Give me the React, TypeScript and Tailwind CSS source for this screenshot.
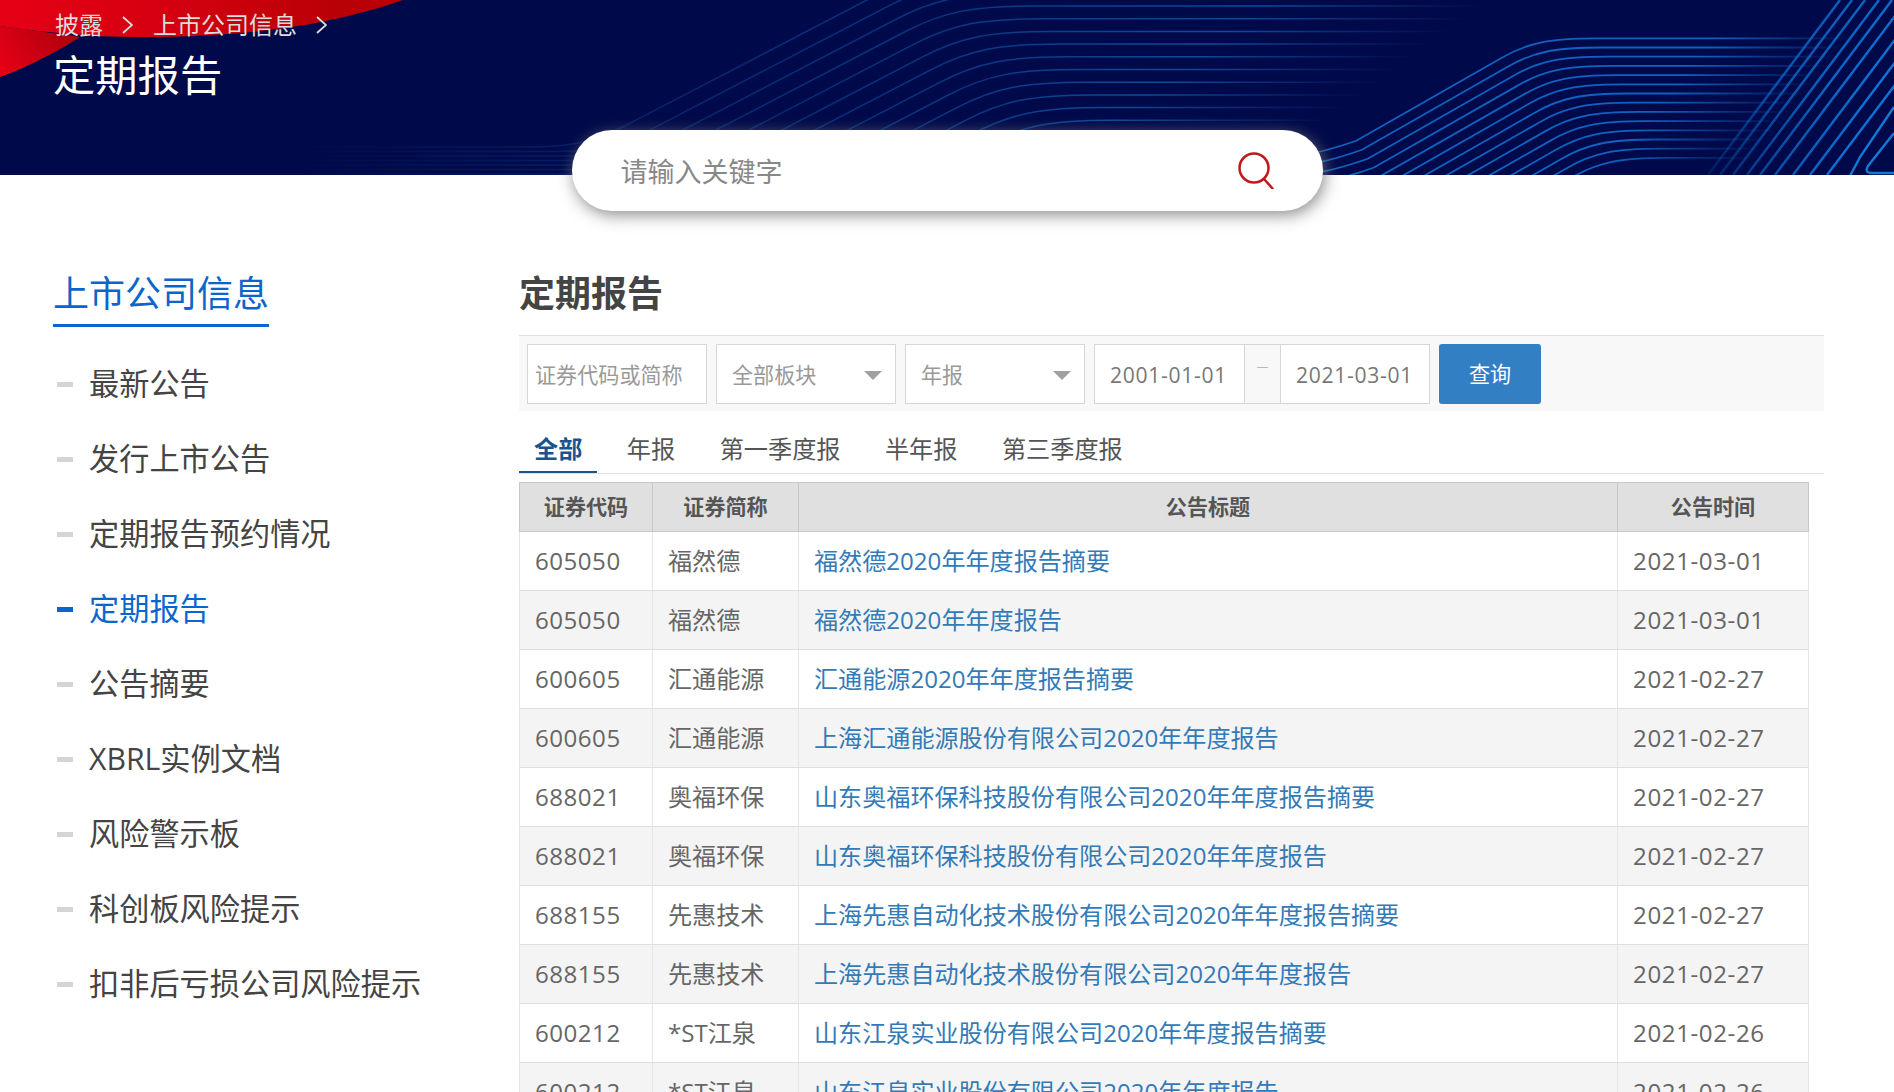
import React from 'react';

const cjk = { fontFamily: '"Open Sans", "Noto Sans CJK SC", sans-serif' };

const NAV = ['最新公告', '发行上市公告', '定期报告预约情况', '定期报告', '公告摘要', 'XBRL实例文档', '风险警示板', '科创板风险提示', '扣非后亏损公司风险提示'];
const TABS = ['全部', '年报', '第一季度报', '半年报', '第三季度报'];

const ROWS = [
  ['605050', '福然德', '福然德2020年年度报告摘要', '2021-03-01'],
  ['605050', '福然德', '福然德2020年年度报告', '2021-03-01'],
  ['600605', '汇通能源', '汇通能源2020年年度报告摘要', '2021-02-27'],
  ['600605', '汇通能源', '上海汇通能源股份有限公司2020年年度报告', '2021-02-27'],
  ['688021', '奥福环保', '山东奥福环保科技股份有限公司2020年年度报告摘要', '2021-02-27'],
  ['688021', '奥福环保', '山东奥福环保科技股份有限公司2020年年度报告', '2021-02-27'],
  ['688155', '先惠技术', '上海先惠自动化技术股份有限公司2020年年度报告摘要', '2021-02-27'],
  ['688155', '先惠技术', '上海先惠自动化技术股份有限公司2020年年度报告', '2021-02-27'],
  ['600212', '*ST江泉', '山东江泉实业股份有限公司2020年年度报告摘要', '2021-02-26'],
  ['600212', '*ST江泉', '山东江泉实业股份有限公司2020年年度报告', '2021-02-26'],
];

// left bundle: comes out from behind the search box, runs flat and fades out
const leftLines = Array.from({ length: 13 }, (_, k) => {
  const f = 6 + 12.7 * (k - 3);
  const X = 617 + 33 * k + (130 - f) / 0.52;
  const L = 147 + 4.5 * k;
  const XL = 617 + 33 * k - (L - 130) / 0.52;
  const end = k >= 3 ? 1483 - 17 * (k - 3) : 1500;
  const d = `M300 ${L} L${XL - 60} ${L} C${XL - 10} ${L} ${XL + 10} ${L - 6} ${XL + 40} ${L - 0.52 * 40} L${X - 50} ${f + 26} C${X - 10} ${f + 5} ${X + 20} ${f} ${X + 80} ${f} L${end} ${f}`;
  return { d, end, span: end - 300 };
});

// middle bundle, right of the search box
const midLines = Array.from({ length: 14 }, (_, i) => {
  const f = 38.3 + 9.2 * i;
  const X = 1536 + 5.4 * i;
  const L = 155 + 9 * i;
  const XL = X - (L - f) / 0.57;
  const end = 1853 - 7.7 * i;
  const d = `M1290 ${L + 3} C${XL - 25} ${L} ${XL - 10} ${L - 2} ${XL + 25} ${L - 0.57 * 25} L${X - 35} ${f + 20} C${X - 8} ${f + 4} ${X + 15} ${f} ${X + 60} ${f} L${end} ${f}`;
  return { d, end };
});

// steep lines in the corner
const cornerX = [1708, 1720, 1733, 1747, 1760, 1775, 1793, 1810, 1827];

const HeaderArt = () => (
  <svg className="absolute inset-0" width="1894" height="175" viewBox="0 0 1894 175" fill="none">
    <defs>
      <linearGradient id="red-main" x1="0" y1="0" x2="403" y2="0" gradientUnits="userSpaceOnUse">
        <stop offset="0" stopColor="#e60016" />
        <stop offset="0.5" stopColor="#d0000f" />
        <stop offset="0.85" stopColor="#b80006" />
      </linearGradient>
      <linearGradient id="red-low" x1="70" y1="34" x2="5" y2="75" gradientUnits="userSpaceOnUse">
        <stop offset="0" stopColor="#ae000c" />
        <stop offset="1" stopColor="#e60016" />
      </linearGradient>
      {leftLines.map((l, k) => (
        <linearGradient key={k} id={`left-${k}`} x1="300" y1="0" x2={l.end} y2="0" gradientUnits="userSpaceOnUse">
          <stop offset="0" stopColor="#1460b8" stopOpacity="0" />
          <stop offset={350 / l.span} stopColor="#1460b8" stopOpacity="0.3" />
          <stop offset={700 / l.span} stopColor="#1460b8" stopOpacity="0.55" />
          <stop offset={(l.span - 220) / l.span} stopColor="#1460b8" stopOpacity="0.75" />
          <stop offset="1" stopColor="#1460b8" stopOpacity="0" />
        </linearGradient>
      ))}
      {midLines.map((l, i) => (
        <linearGradient key={i} id={`mid-${i}`} x1="1290" y1="0" x2={l.end} y2="0" gradientUnits="userSpaceOnUse">
          <stop offset="0" stopColor="#0f62c0" />
          <stop offset={(l.end - 1290 - 140) / (l.end - 1290)} stopColor="#0f62c0" />
          <stop offset="1" stopColor="#0f62c0" stopOpacity="0" />
        </linearGradient>
      ))}
      {cornerX.map((x, i) => (
        <linearGradient key={i} id={`corner-${i}`} x1={x} y1="175" x2={x + 132} y2="0" gradientUnits="userSpaceOnUse">
          <stop offset="0" stopColor="#0f74d8" stopOpacity={0.15 + 0.1 * i} />
          <stop offset="0.5" stopColor="#0f74d8" stopOpacity={0.65 + 0.05 * i} />
          <stop offset="1" stopColor="#0f74d8" stopOpacity={0.8 + 0.03 * i} />
        </linearGradient>
      ))}
    </defs>
    <path d="M0 0H403C340 22 260 37 140 37C90 37 40 32 0 26Z" fill="url(#red-main)" />
    <path d="M0 26C30 30 60 34 80 37C60 50 30 66 0 77Z" fill="url(#red-low)" />
    {leftLines.map((l, k) => (
      <path key={k} d={l.d} stroke={`url(#left-${k})`} strokeWidth="1.5" />
    ))}
    {midLines.map((l, i) => (
      <path key={i} d={l.d} stroke={`url(#mid-${i})`} strokeWidth="1.8" />
    ))}
    {cornerX.map((x, i) => (
      <path key={i} d={`M${x} 175L${x + 132} 0`} stroke={`url(#corner-${i})`} strokeWidth="2.4" />
    ))}
    <path d="M1850 176L1860 157L1894 107" stroke="#1478d8" strokeWidth="2.4" />
    <path d="M1894 133L1868 166Q1864 173 1872 173H1894" stroke="#1478d8" strokeWidth="2.4" />
  </svg>
);

const Chevron = () => (
  <svg width="11" height="18" viewBox="0 0 11 18" fill="none" stroke="#dcdcdc" strokeWidth="1.8">
    <path d="M1 1L10 9L1 17" />
  </svg>
);

const Arrow = () => <div className="w-0 h-0 mt-[2px] border-x-[9px] border-x-transparent border-t-[9px] border-t-[#a0a0a0]" />;

const Select: React.FC<{ label: string }> = ({ label }) => (
  <div className="w-[180px] h-[60px] bg-white border border-[#d6d6d6] flex items-center justify-between pl-[15px] pr-[13px]">
    <span className="text-[21.1px] text-[#999] pt-[1px]">{label}</span>
    <Arrow />
  </div>
);

export default function App() {
  return (
    <div className="h-screen overflow-hidden bg-white" style={cjk}>
      <header className="relative h-[175px] bg-[#000a4a] overflow-hidden">
        <HeaderArt />
        <div className="relative pl-[55px] pt-[9px]">
          <div className="flex items-center h-[32px] text-[24px] text-[#dcdcdc]">
            <span>披露</span>
            <span className="ml-[19px] mr-[20px]"><Chevron /></span>
            <span>上市公司信息</span>
            <span className="ml-[19px]"><Chevron /></span>
          </div>
          <h1 className="text-[42.3px] leading-[60px] mt-[4px] -ml-[2px] text-white font-normal">定期报告</h1>
        </div>
      </header>

      <div className="relative w-[751px] h-[81px] mx-auto -mt-[45px] rounded-[40px] bg-white shadow-[2px_4px_16px_rgba(120,120,120,0.85)] flex items-center justify-between pl-[49px] pr-[49px]">
        <input className="flex-1 pt-[3px] outline-none text-[27px] text-[#888] placeholder:text-[#888]" placeholder="请输入关键字" />
        <svg width="36" height="37" viewBox="0 0 36 37" fill="none" stroke="#c0181c" strokeWidth="2.5">
          <circle cx="16" cy="16" r="14.5" />
          <path d="M26 27L34.5 36.5" strokeLinecap="round" />
        </svg>
      </div>

      <div className="flex mt-[57px]">
        <aside className="w-[519px] shrink-0 pl-[53px]">
          <div className="inline-block text-[36px] leading-[50px] pt-[1px] text-[#0a66cc] border-b-[3px] border-[#0a66cc] pb-[5px]">上市公司信息</div>
          <ul className="mt-[20px]">
            {NAV.map((n) => (
              <li key={n} className="h-[75px] flex items-center">
                <span className={`w-[16px] h-[5px] ml-[4px] mr-[16px] ${n === '定期报告' ? 'bg-[#0a66cc]' : 'bg-[#d5d5d5]'}`} />
                <span className={`text-[30.2px] pb-[1px] ${n === '定期报告' ? 'text-[#0a66cc]' : 'text-[#444]'}`}>{n}</span>
              </li>
            ))}
          </ul>
        </aside>

        <main className="w-[1305px]">
          <h2 className="text-[36px] leading-[50px] pt-[1px] font-bold text-[#444]">定期报告</h2>

          <div className="mt-[16px] h-[76px] bg-[#f8f8f8] border-t border-[#e0e0e0] pt-[8px] pl-[8px] flex gap-[9px]">
            <input className="w-[180px] h-[60px] bg-white border border-[#d6d6d6] pl-[7px] pt-[1px] text-[21.1px] outline-none placeholder:text-[#999]" placeholder="证券代码或简称" />
            <Select label="全部板块" />
            <Select label="年报" />
            <div className="h-[60px] flex bg-white border border-[#d6d6d6] text-[21.1px] text-[#777]">
              <div className="w-[149px] flex items-center pl-[15px] pt-[1px] tracking-[0.7px]">2001-01-01</div>
              <div className="w-[37px] border-x border-[#d6d6d6] bg-[#f8f8f8] text-center text-[12px] leading-[44px] text-[#bbb]">—</div>
              <div className="w-[148px] flex items-center pl-[15px] pt-[1px] tracking-[0.7px]">2021-03-01</div>
            </div>
            <button className="w-[102px] h-[60px] rounded-[3px] bg-[#337fc4] text-white text-[21.1px]">查询</button>
          </div>

          <div className="h-[63px] pt-[12px] border-b border-[#e2e2e2] flex gap-[14.5px]">
            {TABS.map((t, i) => (
              <div
                key={t}
                className={`h-[50px] px-[15px] pt-[3px] text-[24.16px] leading-[45px] ${i === 0 ? 'font-bold text-[#1a5490] border-b-2 border-[#1a5490]' : 'text-[#555]'}`}
              >
                {t}
              </div>
            ))}
          </div>

          <table className="mt-[8px] w-[1289px] table-fixed border-collapse text-[24.1px] text-[#666]">
            <colgroup>
              <col className="w-[133px]" />
              <col className="w-[146px]" />
              <col className="w-[819px]" />
              <col className="w-[191px]" />
            </colgroup>
            <thead>
              <tr className="h-[49px] bg-[#e0e0e0] text-[21.1px] text-[#555]">
                {['证券代码', '证券简称', '公告标题', '公告时间'].map((h) => (
                  <th key={h} className="border border-[#c8c8c8] font-bold text-center">{h}</th>
                ))}
              </tr>
            </thead>
            <tbody>
              {ROWS.map((r, i) => (
                <tr key={i} className={`h-[59px] ${i % 2 === 1 ? 'bg-[#f4f4f4]' : 'bg-white'}`}>
                  <td className="border border-[#e6e6e6] border-b-[#dedede] pl-[15px] tracking-[0.5px]">{r[0]}</td>
                  <td className="border border-[#e6e6e6] border-b-[#dedede] pl-[15px]">{r[1]}</td>
                  <td className="border border-[#e6e6e6] border-b-[#dedede] pl-[15px] text-[#337ab7]">{r[2]}</td>
                  <td className="border border-[#e6e6e6] border-b-[#dedede] pl-[15px] tracking-[0.6px]">{r[3]}</td>
                </tr>
              ))}
            </tbody>
          </table>
        </main>
      </div>
    </div>
  );
}
